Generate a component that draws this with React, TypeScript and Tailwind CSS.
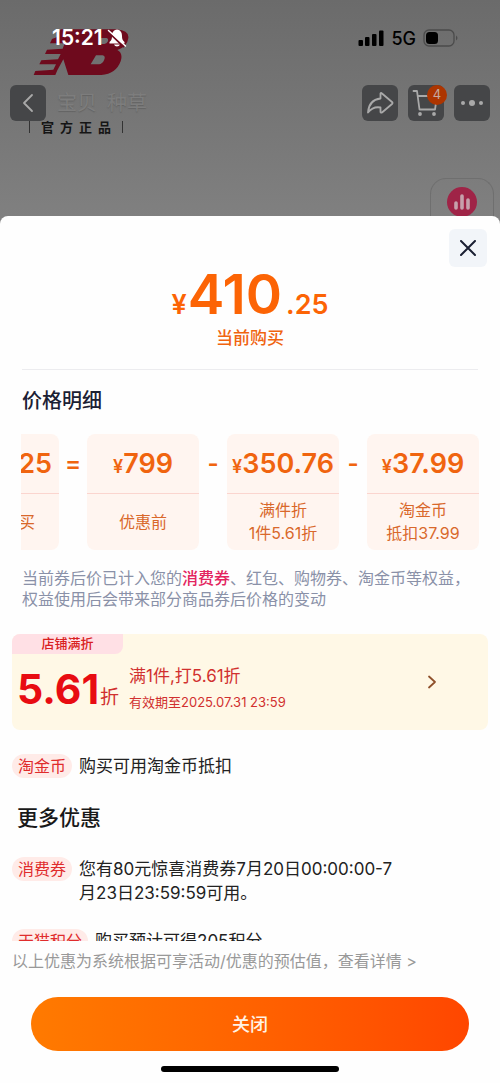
import React from "react";

const priceCards = [
  { sign: "=", amount: "410.25", lines: ["当前购买"] },
  { sign: "-", amount: "799", lines: ["优惠前"] },
  { sign: "-", amount: "350.76", lines: ["满件折", "1件5.61折"] },
  { sign: "", amount: "37.99", lines: ["淘金币", "抵扣37.99"] },
];

function BrandLogo() {
  return (
    <svg className="absolute left-[33px] top-7 h-12 w-24" viewBox="99 84 288 144" fill="#6e0a1d" aria-hidden="true">
      <path
        fillRule="evenodd"
        d="M182 88H350Q388 92 385 114Q382 140 352 150Q370 160 362 184Q348 222 304 225H205L190 178L172 211L166 225H101L106 213L160 209L168 193H118L124 181L174 178L182 162H135L141 149L188 146L194 130H150L156 117L170 112ZM288 166H308Q318 168 312 181Q307 192 297 193H272ZM304 114H320Q327 117 323 125Q320 131 313 132H293Z"
      />
    </svg>
  );
}

function MutedBell() {
  return (
    <svg className="h-5 w-5" viewBox="0 0 20 20" aria-hidden="true">
      <path d="M10 1.500C6.500 2 5 4.500 5 8C5 11 4.500 12 2.500 14V15.500H17.500V14C15.500 12 15 11 15 8C15 4.500 13.500 2 10 1.500ZM7 16.500C8 19 12 19 13 16.500Z" fill="#fff" />
      <path d="M1 3.500L17 19" stroke="#6e0a1d" strokeWidth="2" />
      <path d="M1.500 2.500L18.500 18" stroke="#fff" strokeWidth="1.500" strokeLinecap="round" />
    </svg>
  );
}

function NavButton({ label, children }: { label: string; children: React.ReactNode }) {
  return (
    <button aria-label={label} className="relative flex h-9 w-9 items-center justify-center rounded-md bg-[#454648] text-[#a9a9a9]">
      {children}
    </button>
  );
}

function PageHeader() {
  return (
    <header className="relative h-[216px] shrink-0">
      <BrandLogo />
      <div className="relative flex h-[76px] items-center justify-between pl-[52px] pr-[41px]">
        <div className="flex items-center gap-1 text-[21px] font-semibold text-white">
          <span>15:21</span>
          <MutedBell />
        </div>
        <div className="flex items-center gap-[7px] text-[18px] font-medium text-black">
          <svg className="h-4 w-[26px]" viewBox="0 0 26 16" aria-hidden="true">
            <rect x="0.500" y="10" width="4.500" height="6" rx="1" />
            <rect x="7" y="7" width="4.500" height="9" rx="1" />
            <rect x="14" y="4" width="4.500" height="12" rx="1" />
            <rect x="21" y="0.500" width="4.500" height="15.500" rx="1" />
          </svg>
          <span>5G</span>
          <svg className="h-[18px] w-9" viewBox="0 0 36 18" aria-hidden="true">
            <rect x="1" y="1" width="30" height="16" rx="5" fill="none" stroke="#4b4b4b" strokeWidth="1.300" />
            <rect x="3" y="3" width="12" height="12" rx="3.500" />
            <path d="M33 6.500Q36 9 33 11.500Z" fill="#4b4b4b" />
          </svg>
        </div>
      </div>
      <div className="relative mt-[9px] flex items-center px-[10px]">
        <NavButton label="返回">
          <svg className="h-5 w-5" viewBox="0 0 20 20" fill="none" stroke="currentColor" strokeWidth="1.800" strokeLinecap="round" strokeLinejoin="round">
            <path d="M14 2L6 10L14 18" />
          </svg>
        </NavButton>
        <nav className="ml-[11px] flex gap-[10px] text-[20px] leading-9 text-[#7d7d7d] [text-shadow:0_1px_1px_#636363]">
          <span>宝贝</span>
          <span>种草</span>
        </nav>
        <div className="ml-auto flex gap-[10px]">
          <NavButton label="分享">
            <svg className="h-7 w-7" viewBox="0 0 28 28" fill="none" stroke="currentColor" strokeWidth="1.800" strokeLinejoin="round">
              <path d="M14.500 4.500Q15 3.500 16 4.500L26 13Q27 14 26 15L16 23.500Q15 24 14.500 23V18.500C9 17.500 5.500 19 2 23.500C2.500 15.500 6.500 10.500 14.500 9.500Z" />
            </svg>
          </NavButton>
          <NavButton label="购物车">
            <svg className="h-7 w-7" viewBox="0 0 28 28" fill="none" stroke="currentColor" strokeWidth="1.800" strokeLinecap="round" strokeLinejoin="round">
              <path d="M1.500 2H5L7.500 20.500H23L25 7H6" />
              <circle cx="8" cy="25" r="1" fill="currentColor" />
              <circle cx="22" cy="25" r="1" fill="currentColor" />
            </svg>
            <span className="absolute -right-[3px] top-0 flex h-5 w-5 items-center justify-center rounded-full bg-[#ad3500] text-[13px] text-[#c5aaa0]">4</span>
          </NavButton>
          <NavButton label="更多">
            <svg className="h-6 w-6" viewBox="0 0 24 24" fill="currentColor">
              <circle cx="3" cy="12" r="2" />
              <circle cx="12" cy="12" r="3" />
              <circle cx="21" cy="12" r="2" />
            </svg>
          </NavButton>
        </div>
      </div>
      <p className="relative -mt-[2px] flex items-center gap-[11px] pl-[29px] text-[13px] font-bold leading-4 text-[#151515]">
        <span className="h-3 w-px bg-[#333]" />
        <span className="flex gap-[6px]">
          <span>官</span>
          <span>方</span>
          <span>正</span>
          <span>品</span>
        </span>
        <span className="h-3 w-px bg-[#333]" />
      </p>
      <div className="absolute bottom-0 right-[6px] flex h-[38px] w-16 justify-center rounded-t-[16px] border border-b-0 border-[#6f6f6f] pt-2">
        <svg className="h-[30px] w-[30px]" viewBox="0 0 30 30" aria-hidden="true">
          <circle cx="15" cy="15" r="15" fill="#9f2447" />
          <path d="M9 16V21M15 9V21M21 13V21" stroke="#c6a1ac" strokeWidth="3.600" strokeLinecap="round" />
        </svg>
      </div>
    </header>
  );
}

function PriceBreakdown() {
  return (
    <div className="mx-[21px] mt-[19px] flex justify-end overflow-hidden text-[#f0640f]">
      {priceCards.map((card) => (
        <React.Fragment key={card.amount}>
          <div className="flex h-[116px] w-28 shrink-0 flex-col rounded-lg bg-[#fff5f0]">
            <div className="flex h-[60px] items-baseline justify-center border-b border-[#fbd5cf] pt-[10px] font-semibold">
              <span className="text-[18px]">¥</span>
              <span className="text-[27px]">{card.amount}</span>
            </div>
            <div className="flex flex-1 flex-col justify-center text-center text-[16px] leading-[23px] text-[#d9682b]">
              {card.lines.map((line) => (
                <span key={line}>{line}</span>
              ))}
            </div>
          </div>
          {card.sign && (
            <span className="w-7 shrink-0 text-center text-[24px] font-semibold leading-[60px]">{card.sign}</span>
          )}
        </React.Fragment>
      ))}
    </div>
  );
}

function Coupon() {
  return (
    <section className="mx-3 mt-[24px] h-24 overflow-hidden rounded-lg bg-[#fff8e6]">
      <div className="flex h-5 w-[111px] items-center justify-center rounded-br-lg bg-[#ffe0e5] text-[13px] font-medium text-[#d92020]">
        店铺满折
      </div>
      <div className="flex h-[70px] items-center text-[#d1302f]">
        <p className="ml-[5px] w-28 shrink-0 whitespace-nowrap">
          <span className="text-[41px] font-bold leading-[60px] text-[#e80c12]">5.61</span>
          <span className="ml-px text-[19px]">折</span>
        </p>
        <div>
          <p className="text-[17px] leading-[26px]">满1件,打5.61折</p>
          <p className="text-[13px] leading-[26px]">有效期至2025.07.31 23:59</p>
        </div>
        <button aria-label="查看优惠" className="ml-auto mr-[48px] mt-5 self-start text-[#8f512c]">
          <svg className="h-4 w-4" viewBox="0 0 16 16" fill="none" stroke="currentColor" strokeWidth="1.800" strokeLinecap="round" strokeLinejoin="round">
            <path d="M5 2.500L11 8L5 13.500" />
          </svg>
        </button>
      </div>
    </section>
  );
}

function Benefit({ tag, children }: { tag: string; children: React.ReactNode }) {
  return (
    <div className="mx-3 flex items-start gap-[7px] text-[17px] leading-6 text-[#222]">
      <span className="shrink-0 rounded-full bg-[#ffebe8] px-[6px] text-[16px] text-[#e02c2c]">{tag}</span>
      <p className="max-w-[330px]">{children}</p>
    </div>
  );
}

export default function App() {
  return (
    <div className="flex h-screen flex-col bg-linear-to-b from-[#6b6b6b] to-[#808080] to-20% font-['Inter','Noto_Sans_CJK_SC',sans-serif]">
      <PageHeader />
      <main className="relative flex min-h-0 flex-1 flex-col rounded-t-lg bg-[#fefefe]">
        <button aria-label="关闭弹窗" className="absolute right-[13px] top-[13px] flex h-[38px] w-[38px] items-center justify-center rounded-md bg-[#f2f5f9] text-[#1b2033]">
          <svg className="h-4 w-4" viewBox="0 0 16 16" stroke="currentColor" strokeWidth="2" strokeLinecap="round">
            <path d="M1 1L15 15M15 1L1 15" />
          </svg>
        </button>
        <div className="min-h-0 flex-1 overflow-y-auto pt-[46px] [scrollbar-width:none]">
          <p className="flex h-16 items-baseline justify-center font-semibold leading-[64px] text-[#fc6405]">
            <span className="mr-px text-[27px]">¥</span>
            <span className="text-[55px]">410</span>
            <span className="ml-1 text-[27px]">.25</span>
          </p>
          <p className="text-center text-[17px] font-medium leading-6 text-[#f0640f]">当前购买</p>
          <hr className="mx-[22px] mt-[19px] border-[#ececef]" />
          <h2 className="ml-[22px] mt-[17px] text-[20px] font-medium leading-7 text-[#1b2033]">价格明细</h2>
          <PriceBreakdown />
          <p className="mx-[22px] mt-[18px] text-[16px] leading-[21px] text-[#8a91a8]">
            当前券后价已计入您的<span className="font-medium text-[#e3245f]">消费券</span>、红包、购物券、淘金币等权益，权益使用后会带来部分商品券后价格的变动
          </p>
          <Coupon />
          <div className="mt-6">
            <Benefit tag="淘金币">购买可用淘金币抵扣</Benefit>
          </div>
          <h2 className="mb-[23px] mt-[24px] ml-[17px] text-[21px] font-medium leading-8 text-[#191919]">更多优惠</h2>
          <div className="flex flex-col gap-6">
            <Benefit tag="消费券">您有80元惊喜消费券7月20日00:00:00-7月23日23:59:59可用。</Benefit>
            <Benefit tag="天猫积分">购买预计可得205积分</Benefit>
          </div>
        </div>
        <footer className="flex shrink-0 flex-col items-center pb-[11px]">
          <p className="mt-2 w-full pl-3 text-[16px] leading-6 text-[#999]">
            以上优惠为系统根据可享活动/优惠的预估值，<a href="#details">查看详情 &gt;</a>
          </p>
          <div className="mt-6 w-full px-[31px]">
            <button className="h-[54px] w-full rounded-full bg-linear-to-r from-[#ff7a00] to-[#ff4600] text-[18px] font-medium text-[#fff3e6]">
              关闭
            </button>
          </div>
          <div className="mt-[15px] h-[6px] w-[178px] rounded-full bg-black" />
        </footer>
      </main>
    </div>
  );
}
